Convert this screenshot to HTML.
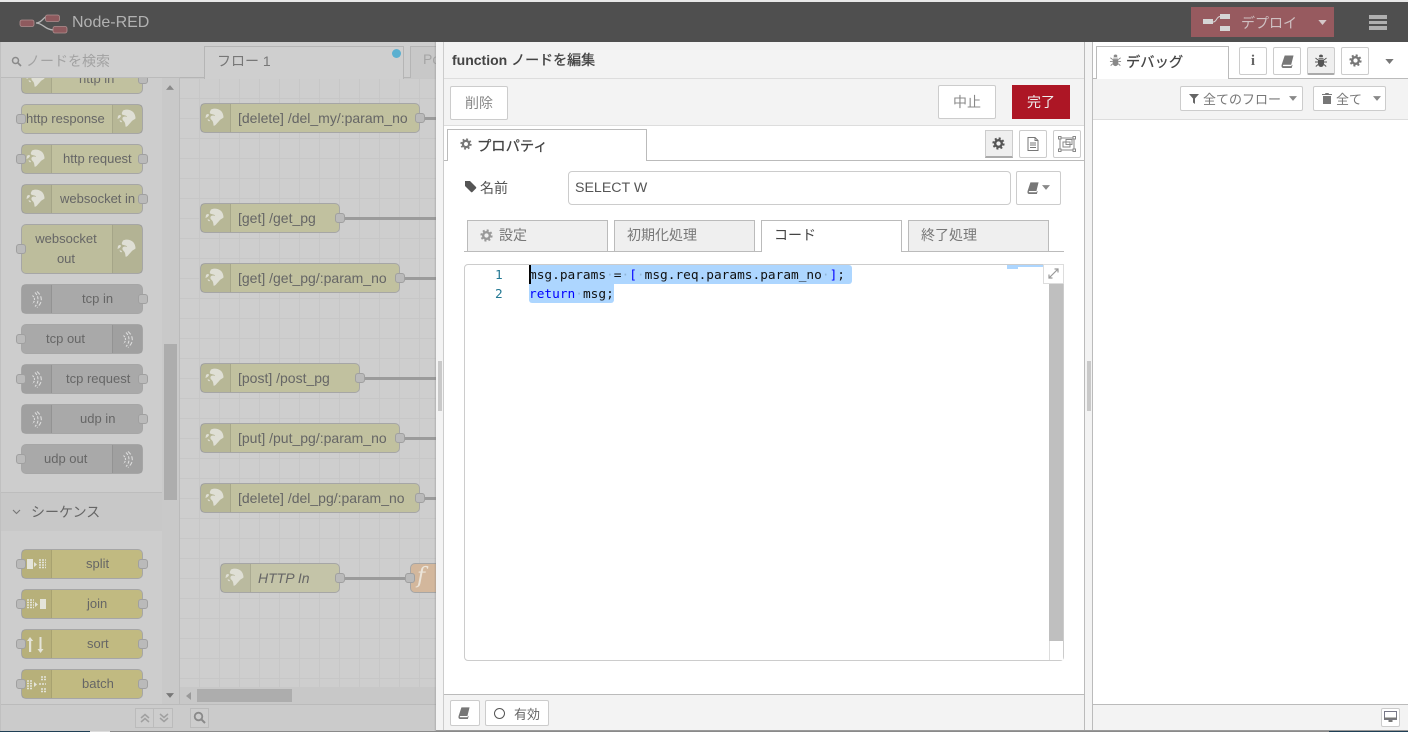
<!DOCTYPE html>
<html><head><meta charset="utf-8">
<style>
*{box-sizing:border-box}
html,body{margin:0;padding:0}
body{width:1408px;height:732px;overflow:hidden;position:relative;background:#fff;font-family:"Liberation Sans","Noto Sans CJK JP",sans-serif;font-size:14px;color:#555}
.a,.n,.p,.b,.t,.tx{position:absolute}
.n{height:30px;border:1.5px solid #a6a6a6;border-radius:5px;background:#c1c19f;color:#666;overflow:visible}
.n.g{background:#a9a9a9}
.n.s{background:#c1ba81}
.n.o{background:#d3b79c}
.ic{position:absolute;top:0;bottom:0;width:30px;background:rgba(0,0,0,.05)}
.ic.l{left:0;border-right:1px solid rgba(0,0,0,.08)}
.ic.r{right:0;border-left:1px solid rgba(0,0,0,.08)}
.ic svg{position:absolute;left:4px;top:4px;width:21px;height:21px}
.lb{position:absolute;top:0;line-height:27px;white-space:nowrap;font-size:13px}
.lb.c{top:1px;font-size:14px}
.p{width:10px;height:10px;background:#bababa;border:1.5px solid #a0a0a0;border-radius:3px;top:9px}
.w{position:absolute;height:3px;background:#9b9b9b}
.b{background:#fff;border:1px solid #ccc;border-radius:2px;color:#888;text-align:center}
.t{background:#efefef;border:1px solid #bbb;border-bottom:0;color:#777;font-size:14px;line-height:29px;white-space:nowrap}
.tx{white-space:nowrap}
.code{position:absolute;font-family:"DejaVu Sans Mono","Liberation Mono",monospace;font-size:12.8px;line-height:19px;white-space:pre;color:#111}
.sel{position:absolute;background:#add6ff}
.d{color:#8fb4d6}
</style></head><body>
<svg width="0" height="0" style="position:absolute">
<defs>
<symbol id="globe" viewBox="0 0 21 21"><path fill="#dfdfd5" d="M6 1.500C9 0 13 .5 15.500 2.500 17.500 4 18.500 7 18.500 9.500 17 11 15.500 11 14.500 12.500 13.500 14 12 15 11 16.500 10 17.500 9 18 8.500 17.500 8.500 15.500 8 14 7.500 13 6.500 11.500 5 11 5.500 9 6 7.500 8 7 10 8 10 6.500 8 6.500 6.500 6 5 6 4.500 4.500 5 3.500z"/><path fill="#dfdfd5" d="M1 7C2 6 3.500 5.500 4 7 3.500 8.500 2 9.500.5 10zM2.500 11.500C3.500 11 5 12 5 13 4 13.500 3 13 2.500 11.500z"/></symbol>
<symbol id="sock" viewBox="0 0 21 21"><g fill="none" stroke="#dcdcdc" stroke-width="1.100"><path d="M9 3.500c2 2 3 4.500 3 7s-1 5-3 7" stroke-dasharray="3 1.500"/><path d="M6.500 6.500c1.300 1.200 2 2.500 2 4s-.7 2.800-2 4" stroke-dasharray="2 1"/><path d="M11 2.500c2.800 2.500 4.300 5 4.300 8s-1.500 5.500-4.300 8" stroke-dasharray="4 2"/></g></symbol>
<symbol id="split" viewBox="0 0 21 21"><rect x="1" y="5" width="6" height="10" fill="#e4e4d9"/><path d="M8 8l3 2.500-3 2.500z" fill="#e4e4d9"/><path d="M13 6h7M13 8.500h7M13 11h7M13 13.500h7" stroke="#e4e4d9" stroke-width="1.400" stroke-dasharray="2 1"/></symbol>
<symbol id="join" viewBox="0 0 21 21"><path d="M1 6h7M1 8.500h7M1 11h7M1 13.500h7" stroke="#e4e4d9" stroke-width="1.400" stroke-dasharray="2 1"/><path d="M9 8l3 2.500-3 2.500z" fill="#e4e4d9"/><rect x="14" y="5" width="6" height="10" fill="#e4e4d9"/></symbol>
<symbol id="sort" viewBox="0 0 21 21"><path fill="#e4e4d9" d="M4.500 3L1.500 7h2v11h2.200V7h2zM14 3v12h-2l3 4 3-4h-2V3z" transform="translate(-.5 0)"/></symbol>
<symbol id="batch" viewBox="0 0 21 21"><path d="M1 7h6M1 9.500h6M1 12h6M1 14.500h6" stroke="#e4e4d9" stroke-width="1.400" stroke-dasharray="2 1"/><path d="M8 8l3 2.500-3 2.500z" fill="#e4e4d9"/><path d="M15 3h5M15 5.500h5M13 10h7M15 15h5M15 17.500h5" stroke="#e4e4d9" stroke-width="1.400" stroke-dasharray="2 1"/></symbol>
<symbol id="gear" viewBox="0 0 14 14"><circle cx="7" cy="7" r="3.600" fill="none" stroke="currentColor" stroke-width="2.600"/><circle cx="7" cy="7" r="5.600" fill="none" stroke="currentColor" stroke-width="2" stroke-dasharray="2.200 2.200"/></symbol>
<symbol id="book" viewBox="0 0 14 14"><path fill="currentColor" d="M4 .5h9.500l-2.500 10H3c-1.200 0-1.200 1.500 0 1.500h8l.5-1 1-.5-1 3.500H2.500C.8 14 .2 12.300.7 10.500z"/></symbol>
<symbol id="bug" viewBox="0 0 14 14"><path fill="currentColor" d="M4.500 4h5v.8h-5zM4 5.500h6V10a3 3 0 0 1-6 0zM5 1.800a2.200 2.200 0 0 1 4 0l-.3 1.500H5.300z"/><path stroke="currentColor" stroke-width="1" fill="none" d="M1.500 4l2.500 2M12.500 4L10 6M1 8h3M13 8h-3M1.800 12.500L4 10.500M12.200 12.500L10 10.500"/></symbol>
<symbol id="tri" viewBox="0 0 10 6"><path fill="currentColor" d="M0 0h10L5 6z"/></symbol>
</defs></svg>

<!-- header -->
<div class="a" style="left:0;top:0;width:1408px;height:2px;background:#e8e8e8"></div>
<div class="a" style="left:0;top:2px;width:1408px;height:40px;background:#4f4f4f"></div>
<svg class="a" style="left:18px;top:12px" width="50" height="22" viewBox="0 0 50 22"><path d="M18 11c6 0 8-7 12-7M18 11c7 0 9 7 18 7" fill="none" stroke="#b5b5b5" stroke-width="1.300"/><rect x="2" y="8" width="14" height="6.500" rx="2" fill="#8e5a5e" stroke="#b09090" stroke-width=".8"/><rect x="27.500" y="3" width="14" height="6.500" rx="2" fill="#8e5a5e" stroke="#b09090" stroke-width=".8"/><rect x="35" y="14.500" width="14" height="6.500" rx="2" fill="#8e5a5e" stroke="#b09090" stroke-width=".8"/></svg>
<div class="tx" style="left:72px;top:14px;font-size:16px;color:#b2b2b2">Node-RED</div>
<div class="a" style="left:1191px;top:7px;width:143px;height:30px;background:#975a5f"></div>
<svg class="a" style="left:1203px;top:14px" width="28" height="18" viewBox="0 0 28 18"><rect x="0" y="5" width="10" height="5" fill="#d5d5d5"/><rect x="17" y="0" width="10" height="5" fill="#d5d5d5"/><rect x="17" y="12" width="10" height="5" fill="#d5d5d5"/><path d="M10 8c4 0 3-5 7-5.500" stroke="#d5d5d5" fill="none"/></svg>
<div class="tx" style="left:1241px;top:13px;font-size:14px;color:#cfc0c2">デプロイ</div>
<svg class="a" style="left:1318px;top:20px;color:#d5c8c9" width="9" height="5"><use href="#tri"/></svg>
<div class="a" style="left:1369px;top:15px;width:18px;height:3.500px;background:#b0b0b0"></div>
<div class="a" style="left:1369px;top:20.500px;width:18px;height:3.500px;background:#b0b0b0"></div>
<div class="a" style="left:1369px;top:26px;width:18px;height:3.500px;background:#b0b0b0"></div>

<!-- palette -->
<div class="a" style="left:0;top:42px;width:180px;height:690px;background:#cdcdcd;border-right:1px solid #bbb;border-left:1px solid #c0c0c0"></div>
<div class="a" style="left:162px;top:78px;width:17px;height:626px;background:#c9c9c9"></div>
<div class="a" style="left:164px;top:344px;width:13px;height:156px;background:#adadad"></div>
<svg class="a" style="left:166px;top:85px;color:#8a8a8a" width="8" height="5"><g transform="rotate(180 4 2.500)"><use href="#tri"/></g></svg>
<svg class="a" style="left:166px;top:693px;color:#777" width="8" height="5"><use href="#tri"/></svg>

<div id="pal" class="a" style="left:0;top:78px;width:180px;height:626px;overflow:hidden">
 <div class="n" style="left:21px;top:-14px;width:122px"><div class="ic l"><svg><use href="#globe"/></svg></div><div class="lb" style="left:57px;color:#6b6b6b">http in</div><div class="p" style="right:-6px"></div></div>
</div>
<div class="n" style="left:21px;top:104px;width:122px"><div class="ic r"><svg><use href="#globe"/></svg></div><div class="lb" style="left:4px">http response</div><div class="p" style="left:-6px"></div></div>
<div class="n" style="left:21px;top:144px;width:122px"><div class="ic l"><svg><use href="#globe"/></svg></div><div class="lb" style="left:41px">http request</div><div class="p" style="left:-6px"></div><div class="p" style="right:-6px"></div></div>
<div class="n" style="left:21px;top:184px;width:122px;background:#bdbd9c"><div class="ic l"><svg><use href="#globe"/></svg></div><div class="lb" style="left:38px">websocket in</div><div class="p" style="right:-6px"></div></div>
<div class="n" style="left:21px;top:224px;width:122px;height:50px;background:#bdbd9c"><div class="ic r"><svg style="top:14px"><use href="#globe"/></svg></div><div class="lb" style="left:0;width:88px;text-align:center;top:4px;line-height:20px;white-space:normal">websocket<br>out</div><div class="p" style="left:-6px;top:19px"></div></div>
<div class="n g" style="left:21px;top:284px;width:122px"><div class="ic l"><svg><use href="#sock"/></svg></div><div class="lb" style="left:60px">tcp in</div><div class="p" style="right:-6px"></div></div>
<div class="n g" style="left:21px;top:324px;width:122px"><div class="ic r"><svg><use href="#sock"/></svg></div><div class="lb" style="left:24px">tcp out</div><div class="p" style="left:-6px"></div></div>
<div class="n g" style="left:21px;top:364px;width:122px"><div class="ic l"><svg><use href="#sock"/></svg></div><div class="lb" style="left:44px">tcp request</div><div class="p" style="left:-6px"></div><div class="p" style="right:-6px"></div></div>
<div class="n g" style="left:21px;top:404px;width:122px"><div class="ic l"><svg><use href="#sock"/></svg></div><div class="lb" style="left:58px">udp in</div><div class="p" style="right:-6px"></div></div>
<div class="n g" style="left:21px;top:444px;width:122px"><div class="ic r"><svg><use href="#sock"/></svg></div><div class="lb" style="left:22px">udp out</div><div class="p" style="left:-6px"></div></div>

<div class="a" style="left:1px;top:492px;width:161px;height:39px;background:#c8c8c8;border-top:1px solid #bdbdbd"></div>
<svg class="a" style="left:12px;top:509px" width="9" height="6"><path d="M1 1l3.500 3.500L8 1" stroke="#777" fill="none" stroke-width="1.100"/></svg>
<div class="tx" style="left:31px;top:502px;font-size:14px;color:#666">シーケンス</div>

<div class="n s" style="left:21px;top:549px;width:122px"><div class="ic l"><svg><use href="#split"/></svg></div><div class="lb" style="left:64px">split</div><div class="p" style="left:-6px"></div><div class="p" style="right:-6px"></div></div>
<div class="n s" style="left:21px;top:589px;width:122px"><div class="ic l"><svg><use href="#join"/></svg></div><div class="lb" style="left:65px">join</div><div class="p" style="left:-6px"></div><div class="p" style="right:-6px"></div></div>
<div class="n s" style="left:21px;top:629px;width:122px"><div class="ic l"><svg><use href="#sort"/></svg></div><div class="lb" style="left:65px">sort</div><div class="p" style="left:-6px"></div><div class="p" style="right:-6px"></div></div>
<div class="n s" style="left:21px;top:669px;width:122px"><div class="ic l"><svg><use href="#batch"/></svg></div><div class="lb" style="left:60px">batch</div><div class="p" style="left:-6px"></div><div class="p" style="right:-6px"></div></div>

<!-- palette search -->
<div class="a" style="left:1px;top:42px;width:179px;height:36px;background:#cfcfcf;border-bottom:1px solid #bbb"></div>
<svg class="a" style="left:11px;top:56px" width="11" height="11" viewBox="0 0 11 11"><circle cx="4.500" cy="4.500" r="3" fill="none" stroke="#8a8a8a" stroke-width="1.500"/><path d="M7 7l3 3" stroke="#8a8a8a" stroke-width="1.700"/></svg>
<div class="tx" style="left:26px;top:51px;font-size:14px;color:#a2a2a2">ノードを検索</div>
<!-- palette footer -->
<div class="a" style="left:1px;top:704px;width:179px;height:27px;background:#cbcbcb;border-top:1px solid #bbb"></div>
<div class="a" style="left:135px;top:708px;width:19px;height:20px;border:1px solid #bbb;background:#cdcdcd"></div>
<svg class="a" style="left:140px;top:713px" width="10" height="10" viewBox="0 0 10 10"><path d="M1 5l4-3.500L9 5M1 9l4-3.500L9 9" fill="none" stroke="#a0a0a0" stroke-width="1.500"/></svg>
<div class="a" style="left:153px;top:708px;width:20px;height:20px;border:1px solid #bbb;background:#cdcdcd"></div>
<svg class="a" style="left:159px;top:713px" width="10" height="10" viewBox="0 0 10 10"><path d="M1 1l4 3.500L9 1M1 5l4 3.500L9 5" fill="none" stroke="#a0a0a0" stroke-width="1.500"/></svg>

<!-- canvas -->
<div class="a" style="left:180px;top:78px;width:256px;height:609px;background-color:#cecece;background-image:linear-gradient(#c7c7c7 1px,transparent 1px),linear-gradient(90deg,#c7c7c7 1px,transparent 1px);background-size:20px 20px;background-position:-1px 0"></div>
<div class="a" style="left:180px;top:42px;width:256px;height:36px;background:#cecece;border-bottom:1px solid #b5b5b5"></div>
<div class="a" style="left:204px;top:46px;width:200px;height:33px;background:#cfcfcf;border:1px solid #b5b5b5;border-bottom:0;color:#777;padding:4px 0 0 12px;font-size:14px">フロー 1</div>
<div class="a" style="left:392px;top:48.500px;width:9px;height:9px;border-radius:50%;background:#5bb0d0"></div>
<div class="a" style="left:410px;top:46px;width:30px;height:32px;background:#c8c8c8;border:1px solid #b5b5b5;border-bottom:0;color:#a5a5a5;padding:4px 0 0 12px;font-size:14px;overflow:hidden">Po</div>

<div class="w" style="left:425px;top:117px;width:11px"></div>
<div class="n" style="left:200px;top:103px;width:220px"><div class="ic l"><svg><use href="#globe"/></svg></div><div class="lb c" style="left:37px">[delete] /del_my/:param_no</div><div class="p" style="right:-6px"></div></div>
<div class="w" style="left:340px;top:217px;width:96px"></div>
<div class="n" style="left:200px;top:203px;width:140px"><div class="ic l"><svg><use href="#globe"/></svg></div><div class="lb c" style="left:37px">[get] /get_pg</div><div class="p" style="right:-6px"></div></div>
<div class="w" style="left:400px;top:277px;width:36px"></div>
<div class="n" style="left:200px;top:263px;width:200px"><div class="ic l"><svg><use href="#globe"/></svg></div><div class="lb c" style="left:37px">[get] /get_pg/:param_no</div><div class="p" style="right:-6px"></div></div>
<div class="w" style="left:360px;top:377px;width:76px"></div>
<div class="n" style="left:200px;top:363px;width:160px"><div class="ic l"><svg><use href="#globe"/></svg></div><div class="lb c" style="left:37px">[post] /post_pg</div><div class="p" style="right:-6px"></div></div>
<div class="w" style="left:400px;top:437px;width:36px"></div>
<div class="n" style="left:200px;top:423px;width:200px"><div class="ic l"><svg><use href="#globe"/></svg></div><div class="lb c" style="left:37px">[put] /put_pg/:param_no</div><div class="p" style="right:-6px"></div></div>
<div class="w" style="left:425px;top:497px;width:11px"></div>
<div class="n" style="left:200px;top:483px;width:220px"><div class="ic l"><svg><use href="#globe"/></svg></div><div class="lb c" style="left:37px">[delete] /del_pg/:param_no</div><div class="p" style="right:-6px"></div></div>
<div class="w" style="left:340px;top:577px;width:70px"></div>
<div class="n" style="left:220px;top:563px;width:120px;background:#c4c4a8"><div class="ic l"><svg><use href="#globe"/></svg></div><div class="lb c" style="left:37px;font-style:italic">HTTP In</div><div class="p" style="right:-6px"></div></div>
<div class="n o" style="left:410px;top:563px;width:40px"><div class="lb" style="left:6px;top:-1px;font-family:'DejaVu Serif','Liberation Serif',serif;font-style:italic;font-size:22px;color:#ece5da">f</div><div class="p" style="left:-6px"></div></div>

<!-- canvas footer & scroll -->
<div class="a" style="left:180px;top:687px;width:256px;height:17px;background:#c8c8c8"></div>
<div class="a" style="left:197px;top:689px;width:95px;height:13px;background:#adadad"></div>
<svg class="a" style="left:186px;top:692px;color:#999" width="5" height="8" viewBox="0 0 5 8"><path fill="currentColor" d="M5 0v8L0 4z"/></svg>
<div class="a" style="left:180px;top:704px;width:256px;height:27px;background:#cbcbcb;border-top:1px solid #bbb"></div>
<div class="a" style="left:190px;top:708px;width:19px;height:20px;border:1px solid #bbb;background:#cdcdcd"></div>
<svg class="a" style="left:193px;top:711px" width="13" height="13" viewBox="0 0 13 13"><circle cx="5.500" cy="5.500" r="3.800" fill="none" stroke="#8a8a8a" stroke-width="1.800"/><path d="M8.500 8.500l3.500 3.500" stroke="#8a8a8a" stroke-width="2"/></svg>

<!-- tray -->
<div class="a" style="left:434px;top:42px;width:3px;height:690px;background:linear-gradient(90deg,rgba(120,120,120,0),rgba(120,120,120,.5))"></div>
<div class="a" style="left:436px;top:42px;width:8px;height:690px;background:#f3f3f3;border-right:1px solid #ccc"></div>
<div class="a" style="left:438px;top:361px;width:4px;height:50px;background:#c9c9c9"></div>
<div class="a" style="left:444px;top:42px;width:640px;height:689px;background:#fff"></div>
<div class="a" style="left:444px;top:42px;width:640px;height:37px;background:#f3f3f3;border-bottom:1px solid #ddd"></div>
<div class="tx" style="left:452px;top:50px;font-size:14px;font-weight:bold;color:#444">function <span style="font-weight:normal;-webkit-text-stroke:.3px #444">ノードを編集</span></div>
<div class="a" style="left:444px;top:79px;width:640px;height:47px;background:#f3f3f3;border-bottom:1px solid #ddd"></div>
<div class="b" style="left:450px;top:86px;width:58px;height:34px;line-height:32px;font-size:14px">削除</div>
<div class="b" style="left:938px;top:85px;width:58px;height:34px;line-height:32px;font-size:14px">中止</div>
<div class="a" style="left:1012px;top:85px;width:58px;height:34px;background:#ad1625;color:#eee;text-align:center;line-height:34px;font-size:14px">完了</div>

<div class="a" style="left:444px;top:160px;width:640px;height:1px;background:#bbb"></div>
<div class="a" style="left:447px;top:129px;width:200px;height:32px;background:#fff;border:1px solid #bbb;border-bottom:0"></div>
<svg class="a" style="left:460px;top:138px;color:#777" width="12" height="12"><use href="#gear"/></svg>
<div class="tx" style="left:477px;top:135px;font-size:14.300px;color:#444;-webkit-text-stroke:.25px #444">プロパティ</div>

<div class="a" style="left:985px;top:130px;width:28px;height:28px;background:#efefef;border:1px solid #ccc;border-bottom:2px solid #aaa"></div>
<svg class="a" style="left:992px;top:137px;color:#555" width="13" height="13"><use href="#gear"/></svg>
<div class="b" style="left:1019px;top:130px;width:28px;height:28px"></div>
<svg class="a" style="left:1027px;top:137px" width="12" height="14" viewBox="0 0 12 14"><path d="M1 .5h7l3 3v10H1z M8 .5v3h3M3 6h6M3 8h6M3 10.500h6" fill="#fff" stroke="#777"/></svg>
<div class="b" style="left:1053px;top:130px;width:28px;height:28px"></div>
<svg class="a" style="left:1058px;top:136px" width="18" height="16" viewBox="0 0 18 16"><g fill="none" stroke="#888"><rect x="2" y="2" width="14" height="12"/><rect x="5" y="6" width="7" height="5"/><rect x="8" y="3.500" width="6" height="5"/></g><g fill="#fff" stroke="#888"><rect x=".5" y=".5" width="2.500" height="2.500"/><rect x="15" y=".5" width="2.500" height="2.500"/><rect x=".5" y="13" width="2.500" height="2.500"/><rect x="15" y="13" width="2.500" height="2.500"/></g></svg>

<svg class="a" style="left:464px;top:180px" width="13" height="13" viewBox="0 0 13 13"><path fill="#555" d="M1 1h5l6 6a1 1 0 0 1 0 1.400l-3.600 3.600a1 1 0 0 1-1.400 0l-6-6z"/></svg>
<div class="tx" style="left:480px;top:178px;font-size:14px;color:#555">名前</div>
<div class="a" style="left:568px;top:171px;width:443px;height:34px;border:1px solid #ccc;border-radius:4px;background:#fff;padding-left:6px;line-height:33px;font-size:14.200px;color:#555">SELECT W</div>
<div class="b" style="left:1016px;top:171px;width:45px;height:34px;border-radius:2px"></div>
<svg class="a" style="left:1027px;top:182px;color:#777" width="12" height="12"><use href="#book"/></svg>
<svg class="a" style="left:1042px;top:185px;color:#888" width="8" height="5"><use href="#tri"/></svg>

<!-- inner tabs -->
<div class="a" style="left:464px;top:251px;width:600px;height:1px;background:#bbb"></div>
<div class="t" style="left:467px;top:220px;width:141px;height:31px"><svg class="a" style="left:12px;top:8px;color:#999" width="13" height="13"><use href="#gear"/></svg><span class="a" style="left:31px;top:0">設定</span></div>
<div class="t" style="left:614px;top:220px;width:141px;height:31px"><span class="a" style="left:12px;top:0">初期化処理</span></div>
<div class="t" style="left:761px;top:220px;width:141px;height:32px;background:#fff;color:#444"><span class="a" style="left:12px;top:0">コード</span></div>
<div class="t" style="left:908px;top:220px;width:141px;height:31px"><span class="a" style="left:12px;top:0">終了処理</span></div>

<!-- editor -->
<div class="a" style="left:464px;top:264px;width:600px;height:397px;border:1px solid #ccc;border-radius:4px;background:#fff"></div>
<div class="sel" style="left:529px;top:265px;width:323px;height:19px;border-radius:3px 3px 3px 0"></div>
<div class="sel" style="left:529px;top:284px;width:85px;height:19px;border-radius:0 0 3px 3px"></div>
<div class="a" style="left:529px;top:265px;width:2px;height:19px;background:#000"></div>
<div class="sel" style="left:1007px;top:265px;width:11px;height:4px"></div>
<div class="sel" style="left:1018px;top:265px;width:25px;height:2px"></div>
<div class="code" style="left:495px;top:266px;color:#237893">1</div>
<div class="code" style="left:495px;top:285px;color:#237893">2</div>
<div class="code" style="left:529px;top:266px">msg.params<span class="d">·</span>=<span class="d">·</span><span style="color:#00f">[</span><span class="d">·</span>msg.req.params.param_no<span class="d">·</span><span style="color:#00f">]</span>;</div>
<div class="code" style="left:529px;top:285px"><span style="color:#00f">return</span><span class="d">·</span>msg;</div>
<div class="a" style="left:1049px;top:284px;width:14px;height:357px;background:#bfbfbf"></div>
<div class="a" style="left:1049px;top:641px;width:14px;height:19px;background:#fff;border-left:1px solid #ddd"></div>
<div class="a" style="left:1043px;top:264px;width:21px;height:20px;background:#fff;border:1px solid #ddd"></div>
<svg class="a" style="left:1048px;top:268px" width="11" height="11" viewBox="0 0 11 11"><path d="M1 10l9-9M6.500 1H10v3.500M1 6.500V10h3.500" stroke="#999" fill="none" stroke-width="1.200"/></svg>

<!-- tray footer -->
<div class="a" style="left:444px;top:694px;width:640px;height:37px;background:#f3f3f3;border-top:1px solid #bbb"></div>
<div class="b" style="left:450px;top:700px;width:30px;height:26px"></div>
<svg class="a" style="left:458px;top:707px;color:#777" width="12" height="12"><use href="#book"/></svg>
<div class="b" style="left:485px;top:700px;width:64px;height:26px"></div>
<div class="a" style="left:494px;top:708px;width:11px;height:11px;border:1px solid #555;border-radius:50%"></div>
<div class="tx" style="left:514px;top:704px;font-size:13px;color:#666">有効</div>
<div class="a" style="left:1084px;top:42px;width:1px;height:689px;background:#bbb"></div>

<!-- sidebar -->
<div class="a" style="left:1085px;top:42px;width:8px;height:689px;background:#f3f3f3;border-right:1px solid #bbb"></div>
<div class="a" style="left:1087px;top:361px;width:4px;height:50px;background:#c9c9c9"></div>
<div class="a" style="left:1093px;top:42px;width:315px;height:37px;background:#fff;border-bottom:1px solid #bbb"></div>
<div class="a" style="left:1096px;top:46px;width:133px;height:33px;background:#fff;border:1px solid #bbb;border-bottom:0"></div>
<svg class="a" style="left:1109px;top:54px;color:#888" width="13" height="13"><use href="#bug"/></svg>
<div class="tx" style="left:1126px;top:51px;font-size:14.300px;color:#444;-webkit-text-stroke:.25px #444">デバッグ</div>
<div class="b" style="left:1239px;top:47px;width:28px;height:28px;font-family:'Liberation Serif',serif;font-weight:bold;font-size:15px;line-height:27px;color:#666">i</div>
<div class="b" style="left:1273px;top:47px;width:28px;height:28px"></div>
<svg class="a" style="left:1281px;top:55px;color:#777" width="13" height="13"><use href="#book"/></svg>
<div class="b" style="left:1307px;top:47px;width:28px;height:28px;background:#efefef;border-bottom:2px solid #aaa"></div>
<svg class="a" style="left:1314px;top:54px;color:#555" width="14" height="14"><use href="#bug"/></svg>
<div class="b" style="left:1341px;top:47px;width:28px;height:28px"></div>
<svg class="a" style="left:1349px;top:54px;color:#777" width="13" height="13"><use href="#gear"/></svg>
<svg class="a" style="left:1385px;top:59px;color:#777" width="9" height="5"><use href="#tri"/></svg>

<div class="a" style="left:1093px;top:79px;width:315px;height:41px;background:#f3f3f3;border-bottom:1px solid #ddd"></div>
<div class="b" style="left:1180px;top:86px;width:123px;height:25px"></div>
<svg class="a" style="left:1189px;top:94px" width="10" height="10" viewBox="0 0 10 10"><path fill="#666" d="M0 0h10L6 4.500V10L4 8.500v-4z"/></svg>
<div class="tx" style="left:1203px;top:89px;font-size:13px;color:#777">全てのフロー</div>
<svg class="a" style="left:1289px;top:96px;color:#888" width="8" height="5"><use href="#tri"/></svg>
<div class="b" style="left:1313px;top:86px;width:73px;height:25px"></div>
<svg class="a" style="left:1322px;top:93px" width="10" height="11" viewBox="0 0 10 11"><path fill="#777" d="M3.500 0h3l.5 1h3v1H0V1h3zM1 3h8v8H1z"/></svg>
<div class="tx" style="left:1336px;top:89px;font-size:13px;color:#777">全て</div>
<svg class="a" style="left:1373px;top:96px;color:#888" width="8" height="5"><use href="#tri"/></svg>

<div class="a" style="left:1093px;top:704px;width:315px;height:27px;background:#f3f3f3;border-top:1px solid #bbb"></div>
<div class="b" style="left:1381px;top:708px;width:19px;height:19px;background:#fff"></div>
<svg class="a" style="left:1384px;top:711px" width="13" height="12" viewBox="0 0 13 12"><rect x=".5" y=".5" width="12" height="8" fill="#fff" stroke="#778"/><rect x="0" y="6.500" width="13" height="2" fill="#777"/><rect x="4.500" y="9" width="4" height="2" fill="#777"/></svg>

<div class="a" style="left:436px;top:730px;width:972px;height:1px;background:#999"></div>
<div class="a" style="left:0;top:731px;width:1408px;height:1px;background:#8a8a8a"></div>
<div class="a" style="left:0;top:731px;width:90px;height:1px;background:#1f3f55"></div>
<div class="a" style="left:90px;top:731px;width:20px;height:1px;background:#ddd"></div>
<div class="a" style="left:1329px;top:731px;width:79px;height:1px;background:#1f3f55"></div>
</body></html>
